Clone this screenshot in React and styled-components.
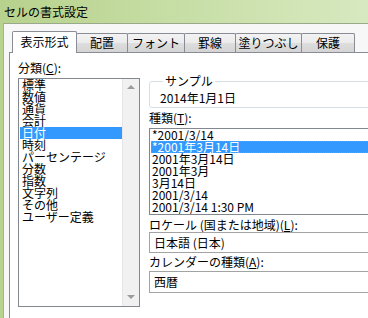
import styled, { createGlobalStyle } from "styled-components";

const GlobalStyle = createGlobalStyle`
  html, body {
    margin: 0;
    padding: 0;
  }
  body {
    width: 368px;
    height: 318px;
    overflow: hidden;
    font-family: "Noto Sans CJK JP", "Noto Sans", sans-serif;
    font-size: 12px;
    color: #000;
  }
`;

const Window = styled.div`
  width: 368px;
  height: 318px;
  display: flex;
  flex-direction: column;
  overflow: hidden;
  background: linear-gradient(90deg, #b7d28c 0%, #c6dda4 45%, #d7e9c0 100%);
`;

const TitleBar = styled.div`
  height: 23px;
  flex: 0 0 23px;
  padding-left: 4px;
  line-height: 23px;
  font-size: 12px;
  color: #000;
`;

const Client = styled.div`
  flex: 1;
  display: flex;
  flex-direction: column;
  margin-left: 3px;
  padding: 7px 0 0 5px;
  background: #f7f7f7;
  border-top: 1px solid #9aa98a;
  border-left: 1px solid #a6b39a;
  min-height: 0;
`;

const TabStrip = styled.div`
  display: flex;
  align-items: flex-end;
  height: 21px;
  padding-left: 3px;
`;

const Tab = styled.div`
  position: relative;
  box-sizing: border-box;
  width: ${(p) => p.$w}px;
  height: ${(p) => (p.$active ? 22 : 19)}px;
  margin-right: -1px;
  margin-bottom: ${(p) => (p.$active ? -1 : 0)}px;
  z-index: ${(p) => (p.$active ? 2 : 1)};
  border: 1px solid #898c95;
  border-bottom: none;
  border-radius: 2px 2px 0 0;
  background: ${(p) =>
    p.$active
      ? "#fff"
      : "linear-gradient(180deg, #f3f3f3 0%, #ebebeb 50%, #dedede 51%, #d4d4d4 100%)"};
  text-align: center;
  line-height: ${(p) => (p.$active ? 19 : 17)}px;
  font-size: 12px;
  white-space: nowrap;
`;

const TabPage = styled.div`
  flex: 1;
  background: #fff;
  border-top: 1px solid #898c95;
  border-left: 1px solid #898c95;
  padding: 9px 0 0 8px;
  display: flex;
  gap: 9px;
  overflow: hidden;
`;

const LeftCol = styled.div`
  flex: 0 0 122px;
  display: flex;
  flex-direction: column;
`;

const RightCol = styled.div`
  flex: 0 0 250px;
  display: flex;
  flex-direction: column;
`;

const Label = styled.div`
  line-height: 12px;
  height: 12px;
  font-size: 12px;
  white-space: nowrap;
  margin-top: ${(p) => p.$mt || 0}px;
  margin-bottom: ${(p) => p.$mb || 0}px;

  u {
    text-decoration: underline;
    text-underline-offset: 1px;
  }
`;

const ListBox = styled.div`
  box-sizing: border-box;
  height: ${(p) => p.$h}px;
  border: 1px solid #828790;
  display: flex;
  background: #fff;
  padding-bottom: ${(p) => p.$pb || 0}px;
`;

const Items = styled.div`
  flex: 1;
  display: flex;
  flex-direction: column;
  padding-left: 1px;
  min-width: 0;
`;

const Item = styled.div`
  height: 12px;
  line-height: 12px;
  padding-left: ${(p) => p.$pl || 2}px;
  white-space: nowrap;
  font-size: 12px;
  background: ${(p) => (p.$selected ? "#3399ff" : "transparent")};
  color: ${(p) => (p.$selected ? "#fff" : "#000")};
  outline: ${(p) => (p.$focus ? "1px dotted #d9892b" : "none")};
  outline-offset: -1px;
`;

const ScrollBar = styled.div`
  flex: 0 0 17px;
  display: flex;
  flex-direction: column;
  justify-content: space-between;
  align-items: center;
  padding: 6px 0 7px;
  background: #f1f1f1;
  border-left: 1px solid #e6e6e6;
  box-sizing: border-box;
`;

const Arrow = styled.div`
  width: 0;
  height: 0;
  border-left: 4px solid transparent;
  border-right: 4px solid transparent;
  ${(p) =>
    p.$down
      ? "border-top: 4px solid #9b9b9b;"
      : "border-bottom: 4px solid #9b9b9b;"}
`;

const GroupBox = styled.fieldset`
  margin: 13px 0 0 0;
  padding: 5px 0 3px 10px;
  border: 1px solid #d5dfe5;
  border-radius: 3px;
  min-width: 0;
`;

const Legend = styled.legend`
  margin-left: 3px;
  padding: 0 2px;
  line-height: 12px;
  font-size: 12px;
`;

const SampleText = styled.div`
  line-height: 12px;
  height: 12px;
`;

const Combo = styled.div`
  box-sizing: border-box;
  height: ${(p) => p.$h || 21}px;
  margin-top: ${(p) => p.$mt || 0}px;
  border: 1px solid #a3a3a3;
  padding-left: 4px;
  line-height: ${(p) => (p.$h || 21) - 2}px;
  white-space: nowrap;
`;

const tabs = [
  { name: "表示形式", w: 65 },
  { name: "配置", w: 52 },
  { name: "フォント", w: 58 },
  { name: "罫線", w: 52 },
  { name: "塗りつぶし", w: 67 },
  { name: "保護", w: 54 },
];

const categories = [
  "標準",
  "数値",
  "通貨",
  "会計",
  "日付",
  "時刻",
  "パーセンテージ",
  "分数",
  "指数",
  "文字列",
  "その他",
  "ユーザー定義",
];

const types = [
  "*2001/3/14",
  "*2001年3月14日",
  "2001年3月14日",
  "2001年3月",
  "3月14日",
  "2001/3/14",
  "2001/3/14 1:30 PM",
];

export default function App() {
  return (
    <>
      <GlobalStyle />
      <Window>
        <TitleBar>セルの書式設定</TitleBar>
        <Client>
          <TabStrip>
            {tabs.map((t, i) => (
              <Tab key={t.name} $w={t.w} $active={i === 0}>
                {t.name}
              </Tab>
            ))}
          </TabStrip>
          <TabPage>
            <LeftCol>
              <Label $mb={4}>
                分類(<u>C</u>):
              </Label>
              <ListBox $h={229}>
                <Items>
                  {categories.map((c) => (
                    <Item key={c} $selected={c === "日付"}>
                      {c}
                    </Item>
                  ))}
                </Items>
                <ScrollBar>
                  <Arrow />
                  <Arrow $down />
                </ScrollBar>
              </ListBox>
            </LeftCol>
            <RightCol>
              <GroupBox>
                <Legend>サンプル</Legend>
                <SampleText>2014年1月1日</SampleText>
              </GroupBox>
              <Label $mt={4} $mb={4}>
                種類(<u>T</u>):
              </Label>
              <ListBox $h={87} $pb={1}>
                <Items>
                  {types.map((t, i) => (
                    <Item
                      key={t}
                      $pl={1}
                      $selected={i === 1}
                      $focus={i === 1}
                    >
                      {t}
                    </Item>
                  ))}
                </Items>
              </ListBox>
              <Label $mt={4}>
                ロケール (国または地域)(<u>L</u>):
              </Label>
              <Combo $mt={1}>日本語 (日本)</Combo>
              <Label $mt={3}>
                カレンダーの種類(<u>A</u>):
              </Label>
              <Combo $mt={3} $h={22}>
                西暦
              </Combo>
            </RightCol>
          </TabPage>
        </Client>
      </Window>
    </>
  );
}
